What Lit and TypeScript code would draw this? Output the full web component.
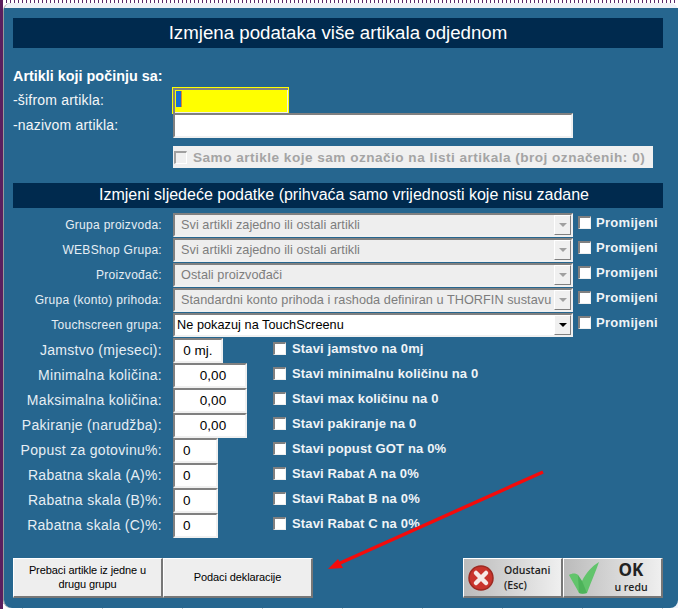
import { LitElement, html, css, svg } from "lit";
import { customElement } from "lit/decorators.js";

const selects = [
  ["Grupa proizvoda:", "Svi artikli zajedno ili ostali artikli", true],
  ["WEBShop Grupa:", "Svi artikli zajedno ili ostali artikli", true],
  ["Proizvođač:", "Ostali proizvođači", true],
  ["Grupa (konto) prihoda:", "Standardni konto prihoda i rashoda definiran u THORFIN sustavu", true],
  ["Touchscreen grupa:", "Ne pokazuj na TouchScreenu", false],
] as const;

const fields = [
  ["Jamstvo (mjeseci):", "0 mj.", "w50", "Stavi jamstvo na 0mj"],
  ["Minimalna količina:", "0,00", "w74", "Stavi minimalnu količinu na 0"],
  ["Maksimalna količina:", "0,00", "w74", "Stavi max količinu na 0"],
  ["Pakiranje (narudžba):", "0,00", "w74", "Stavi pakiranje na 0"],
  ["Popust za gotovinu%:", "0", "w45", "Stavi popust GOT na 0%"],
  ["Rabatna skala (A)%:", "0", "w45", "Stavi Rabat A na 0%"],
  ["Rabatna skala (B)%:", "0", "w45", "Stavi Rabat B na 0%"],
  ["Rabatna skala (C)%:", "0", "w45", "Stavi Rabat C na 0%"],
] as const;

@customElement("app-root")
export class AppRoot extends LitElement {
  static styles = css`
    :host { display: block; width: 678px; height: 609px; overflow: hidden; position: relative;
      font-family: "Liberation Sans", Arial, sans-serif; background-color: #fff;
      background-image:
        linear-gradient(#5a1f5e, #5a1f5e),
        repeating-linear-gradient(90deg, #5a2a6a 0 1px, transparent 1px 4px),
        linear-gradient(#c8c8c8 1px, transparent 1px),
        linear-gradient(90deg, #c8c8c8 1px, transparent 1px);
      background-size: 3px 6px, 40px 3px, 80px 22px, 80px 22px;
      background-position: 0 20px, 22px 0, 0 9px, 22px 0;
      background-repeat: repeat-y, repeat-x, repeat, repeat; }
    .window { box-sizing: border-box; width: 675px; height: 605px; margin: 3px 0 0 3px; background: #eef2f8;
      border-radius: 8px 8px 0 8px; padding-top: 5px; border-left: 1px solid #999; }
    .panel { box-sizing: border-box; height: 600px; background: #26668f; border-radius: 0 0 8px 8px; padding: 10px 15px 0 9px; color: #fff; }
    .head { background: #002a4e; color: #fff; text-align: center; }
    .h1 { height: 30px; line-height: 30px; font-size: 18.7px; }
    .h2 { height: 25px; line-height: 24px; font-size: 16px; margin-top: 15px; padding-left: 12px; white-space: nowrap; }
    .section { font-weight: bold; font-size: 14.4px; margin-top: 19px; height: 21px; line-height: 18px; }
    .toprow { display: flex; height: 25px; align-items: center; font-size: 14px; letter-spacing: .2px; }
    .toplabel { width: 160px; flex: none; color: #f4f6f8; margin-top: -2px; }
    .in { box-sizing: border-box; background: #fff; border: 2px solid #f0f0f0; border-top-color: #808080; border-left-color: #808080; }
    .yellow { box-sizing: border-box; width: 117px; height: 27px; margin-left: -1px; background: #ff0; border: 1px solid #ff0; box-shadow: inset 2px 2px 0 #808080, inset -1px -1px 0 #eee; overflow: hidden; }
    .caret { display: block; width: 5px; height: 16px; background: #1a6fd0; border-right: 1px solid #e08a20; margin: 3px 0 0 3px; }
    .wide { width: 400px; height: 25px; }
    .disabledrow { margin: 8px 0 0 160px; width: 480px; height: 22px; background: #f0f0f0; display: flex; align-items: center; color: #a4a4a4; font-weight: bold; font-size: 13.6px; letter-spacing: .48px; white-space: nowrap; }
    .box { box-sizing: border-box; width: 13px; height: 13px; flex: none; background: #fff; border: 1px solid #f0f0f0; border-top: 2px solid #808080; border-left: 2px solid #808080; }
    .disabledrow .box { background: #f0f0f0; margin: 0 6px 0 1px; border-color: #fff; border-top-color: #a0a0a0; border-left-color: #a0a0a0; }
    .rows { margin-top: 5px; display: grid; grid-auto-rows: 25px; }
    .row { display: flex; align-items: flex-start; position: relative; }
    .label { width: 160px; flex: none; box-sizing: border-box; padding-right: 11px; text-align: right; color: #e6eef4; white-space: nowrap; height: 24px; line-height: 25px; }
    .sm { font-size: 12px; letter-spacing: .3px; }
    .lg { font-size: 14px; letter-spacing: .3px; }
    .select { box-sizing: border-box; width: 400px; height: 24px; display: flex; border: 2px solid #f0f0f0; border-top-color: #808080; border-left-color: #808080; font-size: 12.7px; line-height: 21px; overflow: hidden; }
    .select.off { background: #eee; color: #7d7d7d; }
    .select.on { background: #fff; color: #000; }
    .select .t { flex: 1; padding-left: 6px; white-space: nowrap; overflow: hidden; letter-spacing: .05px; }
    .select.on .t { padding-left: 2px; }
    .drop { box-sizing: border-box; width: 17px; flex: none; background: #f0f0f0; display: flex; align-items: center; justify-content: center; border: 1px solid #808080; border-top-color: #fff; border-left-color: #fff; }
    .drop i { width: 0; height: 0; border: 4px solid transparent; border-top: 4px solid #000; border-bottom: 0; }
    .off .drop i { border-top-color: #a0a0a0; }
    .chk { display: flex; align-items: center; gap: 5px; margin-left: 5px; height: 19px; font-weight: bold; font-size: 13px; color: #f0f4f7; letter-spacing: .3px; white-space: nowrap; }
    .field { box-sizing: border-box; height: 25px; font-size: 13.5px; color: #000; text-align: center; line-height: 22px; border: 2px solid #f0f0f0; border-top-color: #808080; border-left-color: #808080; background: #fff; }
    .w50 { width: 50px; } .w74 { width: 74px; padding-left: 6px; } .w45 { width: 45px; text-align: left; padding-left: 8px; }
    .r2 { margin-left: 0; position: absolute; left: 260px; top: 1px; letter-spacing: .15px; gap: 6px; }
    .buttons { display: flex; margin-top: 20px; height: 40px; }
    .btn { box-sizing: border-box; border: 1px solid #fff; border-right: 2px solid #777; border-bottom: 2px solid #777; background: #eee; color: #000; font-size: 11px; letter-spacing: -.1px; line-height: 13.5px; text-align: center; display: flex; align-items: center; justify-content: center; }
    .b1, .b2 { width: 150px; }
    .sp { width: 150px; }
    .img { width: 100px; background: linear-gradient(90deg, #bbb, #efefef); font-family: "Open Sans", sans-serif; font-weight: 600; color: #222; justify-content: flex-start; text-align: left; letter-spacing: 0; }
    .img svg { flex: none; }
    .odu { font-size: 10.5px; line-height: 15px; margin-left: 10px; }
    .okt { text-align: center; margin-left: 9px; width: 44px; font-size: 10.5px; line-height: 15px; }
    .okt b { display: block; font-size: 17px; line-height: 20px; font-weight: 700; }
    .arrow { position: absolute; left: 0; top: 0; pointer-events: none; }
  `;

  render() {
    return html`
      <div class="window"><div class="panel">
        <div class="head h1">Izmjena podataka više artikala odjednom</div>
        <div class="section">Artikli koji počinju sa:</div>
        <div class="toprow"><span class="toplabel">-šifrom artikla:</span><div class="yellow"><span class="caret"></span></div></div>
        <div class="toprow"><span class="toplabel">-nazivom artikla:</span><div class="in wide"></div></div>
        <div class="disabledrow"><span class="box"></span>Samo artikle koje sam označio na listi artikala (broj označenih: 0)</div>
        <div class="head h2">Izmjeni sljedeće podatke (prihvaća samo vrijednosti koje nisu zadane</div>
        <div class="rows">
          ${selects.map(([l, v, off]) => html`<div class="row">
            <div class="label sm">${l}</div>
            <div class="select ${off ? "off" : "on"}"><span class="t">${v}</span><span class="drop"><i></i></span></div>
            <div class="chk"><span class="box"></span>Promijeni</div>
          </div>`)}
          ${fields.map(([l, v, w, c]) => html`<div class="row">
            <div class="label lg">${l}</div>
            <div class="field ${w}">${v}</div>
            <div class="chk r2"><span class="box"></span>${c}</div>
          </div>`)}
        </div>
        <div class="buttons">
          <div class="btn b1">Prebaci artikle iz jedne u<br />drugu grupu</div>
          <div class="btn b2">Podaci deklaracije</div>
          <div class="sp"></div>
          <div class="btn img">
            <svg width="26" height="26" viewBox="0 0 26 26" style="margin-left:4px"><circle cx="13" cy="13" r="12" fill="#c9342c"/><circle cx="13" cy="13" r="12" fill="none" stroke="#9c2a22" stroke-width="1.5"/><path d="M8 8l10 10M18 8L8 18" stroke="#f6e9e6" stroke-width="4.5" stroke-linecap="round"/></svg>
            <span class="odu">Odustani<br />(Esc)</span>
          </div>
          <div class="btn img">
            <svg width="32" height="34" viewBox="0 0 32 34" style="margin-left:4px"><path d="M1 14c3-2 7-2 9 0l4 6C18 12 24 5 31 1c-3 9-8 20-12 31-3 1-6 1-8 0C8 26 4 20 1 14z" fill="#62c46c"/><path d="M10 14l4 6 5 12c-3 1-6 1-8 0z" fill="#3fa94f" opacity=".6"/></svg>
            <span class="okt"><b>OK</b>u redu</span>
          </div>
        </div>
      </div></div>
      <svg class="arrow" width="678" height="609" viewBox="0 0 678 609">
        ${svg`<line x1="543" y1="472" x2="338" y2="564" stroke="#f40b0b" stroke-width="3.4"/><path d="M328 569L338 559L343 568z" fill="#f40b0b"/>`}
      </svg>
    `;
  }
}
